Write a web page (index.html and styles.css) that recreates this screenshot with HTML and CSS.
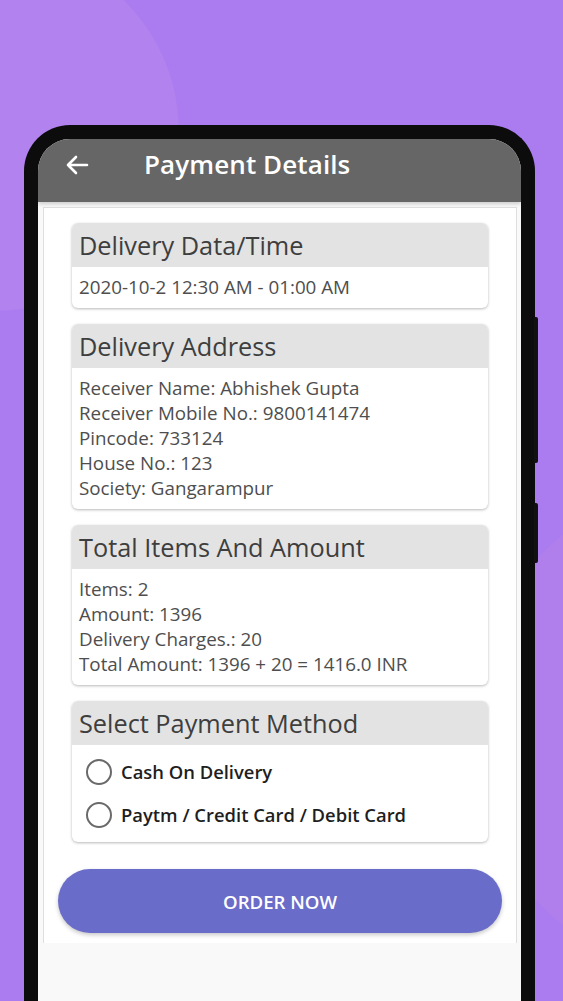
FILE: index.html
```html
<!DOCTYPE html>
<html lang="en">
<head>
<meta charset="utf-8">
<title>Payment Details</title>
<link rel="stylesheet" href="styles.css">
</head>
<body>
<div class="phone">
  <div class="side-btn side-btn-1"></div>
  <div class="side-btn side-btn-2"></div>
  <div class="screen">
    <header class="appbar">
      <svg class="back" width="24" height="20" viewBox="0 0 24 20" aria-hidden="true">
        <path d="M22 10H3M11 2L3 10L11 18" fill="none" stroke="#fff" stroke-width="2.6" stroke-linecap="round" stroke-linejoin="round"/>
      </svg>
      <h1 class="title">Payment Details</h1>
    </header>
    <main class="panel">
      <div class="cards">
        <section class="card">
          <h2 class="card-head">Delivery Data/Time</h2>
          <div class="card-body">
            <p>2020-10-2 12:30 AM - 01:00 AM</p>
          </div>
        </section>
        <section class="card">
          <h2 class="card-head">Delivery Address</h2>
          <div class="card-body">
            <p>Receiver Name: Abhishek Gupta</p>
            <p>Receiver Mobile No.: 9800141474</p>
            <p>Pincode: 733124</p>
            <p>House No.: 123</p>
            <p>Society: Gangarampur</p>
          </div>
        </section>
        <section class="card">
          <h2 class="card-head">Total Items And Amount</h2>
          <div class="card-body">
            <p>Items: 2</p>
            <p>Amount: 1396</p>
            <p>Delivery Charges.: 20</p>
            <p>Total Amount: 1396 + 20 = 1416.0 INR</p>
          </div>
        </section>
        <section class="card">
          <h2 class="card-head">Select Payment Method</h2>
          <div class="card-body radios">
            <label class="radio"><span class="dot"></span><span>Cash On Delivery</span></label>
            <label class="radio"><span class="dot"></span><span>Paytm / Credit Card / Debit Card</span></label>
          </div>
        </section>
      </div>
      <button class="order">ORDER NOW</button>
    </main>
  </div>
</div>
</body>
</html>
```

FILE: styles.css
```css
* { box-sizing: border-box; }
html, body { margin: 0; padding: 0; }
body {
  width: 563px;
  height: 1001px;
  overflow: hidden;
  background:
    radial-gradient(circle at -2px 130px, #b282ee 0 180px, transparent 181px),
    radial-gradient(circle at 720px 730px, #b07fec 0 250px, transparent 251px),
    #aa7cef;
  font-family: "Open Sans", "Noto Sans", sans-serif;
}
.phone {
  position: relative;
  margin: 125px 0 0 24px;
  width: 511px;
  height: 876px;
  border: 14px solid #0c0c0c;
  border-bottom: none;
  border-radius: 46px 46px 0 0;
  background: #0c0c0c;
  box-shadow: inset 0 0 0 2px #2e2e2e;
}
.side-btn {
  position: absolute;
  right: -17px;
  width: 4px;
  background: #111;
  border-radius: 0 2px 2px 0;
}
.side-btn-1 { top: 178px; height: 146px; }
.side-btn-2 { top: 364px; height: 60px; }
.screen {
  height: 100%;
  background: #f9f9f9;
  border-radius: 32px 32px 0 0;
  overflow: hidden;
}
.appbar {
  height: 63px;
  background: #666666;
  display: flex;
  align-items: center;
  padding: 0 0 13px 27px;
  box-shadow: 0 2px 4px rgba(0,0,0,0.18);
  position: relative;
}
.back { display: block; margin-top: 2px; }
.title {
  margin: 0 0 0 55px;
  color: #fff;
  font-size: 26px;
  font-weight: 600;
  letter-spacing: 0.1px;
}
.panel {
  margin: 5px 4px 0 5px;
  height: 736px;
  background: #fff;
  border: 1px solid #dedede;
  border-bottom: none;
  padding: 15px 14px 10px;
  display: flex;
  flex-direction: column;
}
.cards {
  padding: 0 14px;
  display: flex;
  flex-direction: column;
  gap: 16px;
}
.card {
  background: #fff;
  border-radius: 6px;
  overflow: hidden;
  box-shadow: 0 1px 3px rgba(0,0,0,0.28);
}
.card-head {
  margin: 0;
  height: 44px;
  background: #e3e3e3;
  color: #3e3e3e;
  font-size: 25.3px;
  font-weight: 500;
  line-height: 44px;
  padding-left: 7px;
}
.card-body {
  padding: 8px 7px;
  color: #4e4e4e;
  font-size: 18.8px;
  font-weight: 500;
  line-height: 25px;
}
.card-body p { margin: 0; white-space: nowrap; }
.radios { padding: 5px 0 6px 14px; }
.radio {
  display: flex;
  align-items: center;
  height: 43px;
  gap: 9px;
  color: #1e1e1e;
  font-weight: 600;
  font-size: 18.4px;
}
.dot {
  width: 26px;
  height: 26px;
  border-radius: 50%;
  border: 2px solid #6a6a6a;
  flex: none;
}
.order {
  margin-top: 27px;
  height: 64px;
  border: none;
  border-radius: 32px;
  background: #6a6cc9;
  color: #fff;
  font-family: "Open Sans", "Noto Sans", sans-serif;
  font-size: 18.6px;
  font-weight: 600;
  box-shadow: 0 2px 4px rgba(0,0,0,0.22);
}
```
